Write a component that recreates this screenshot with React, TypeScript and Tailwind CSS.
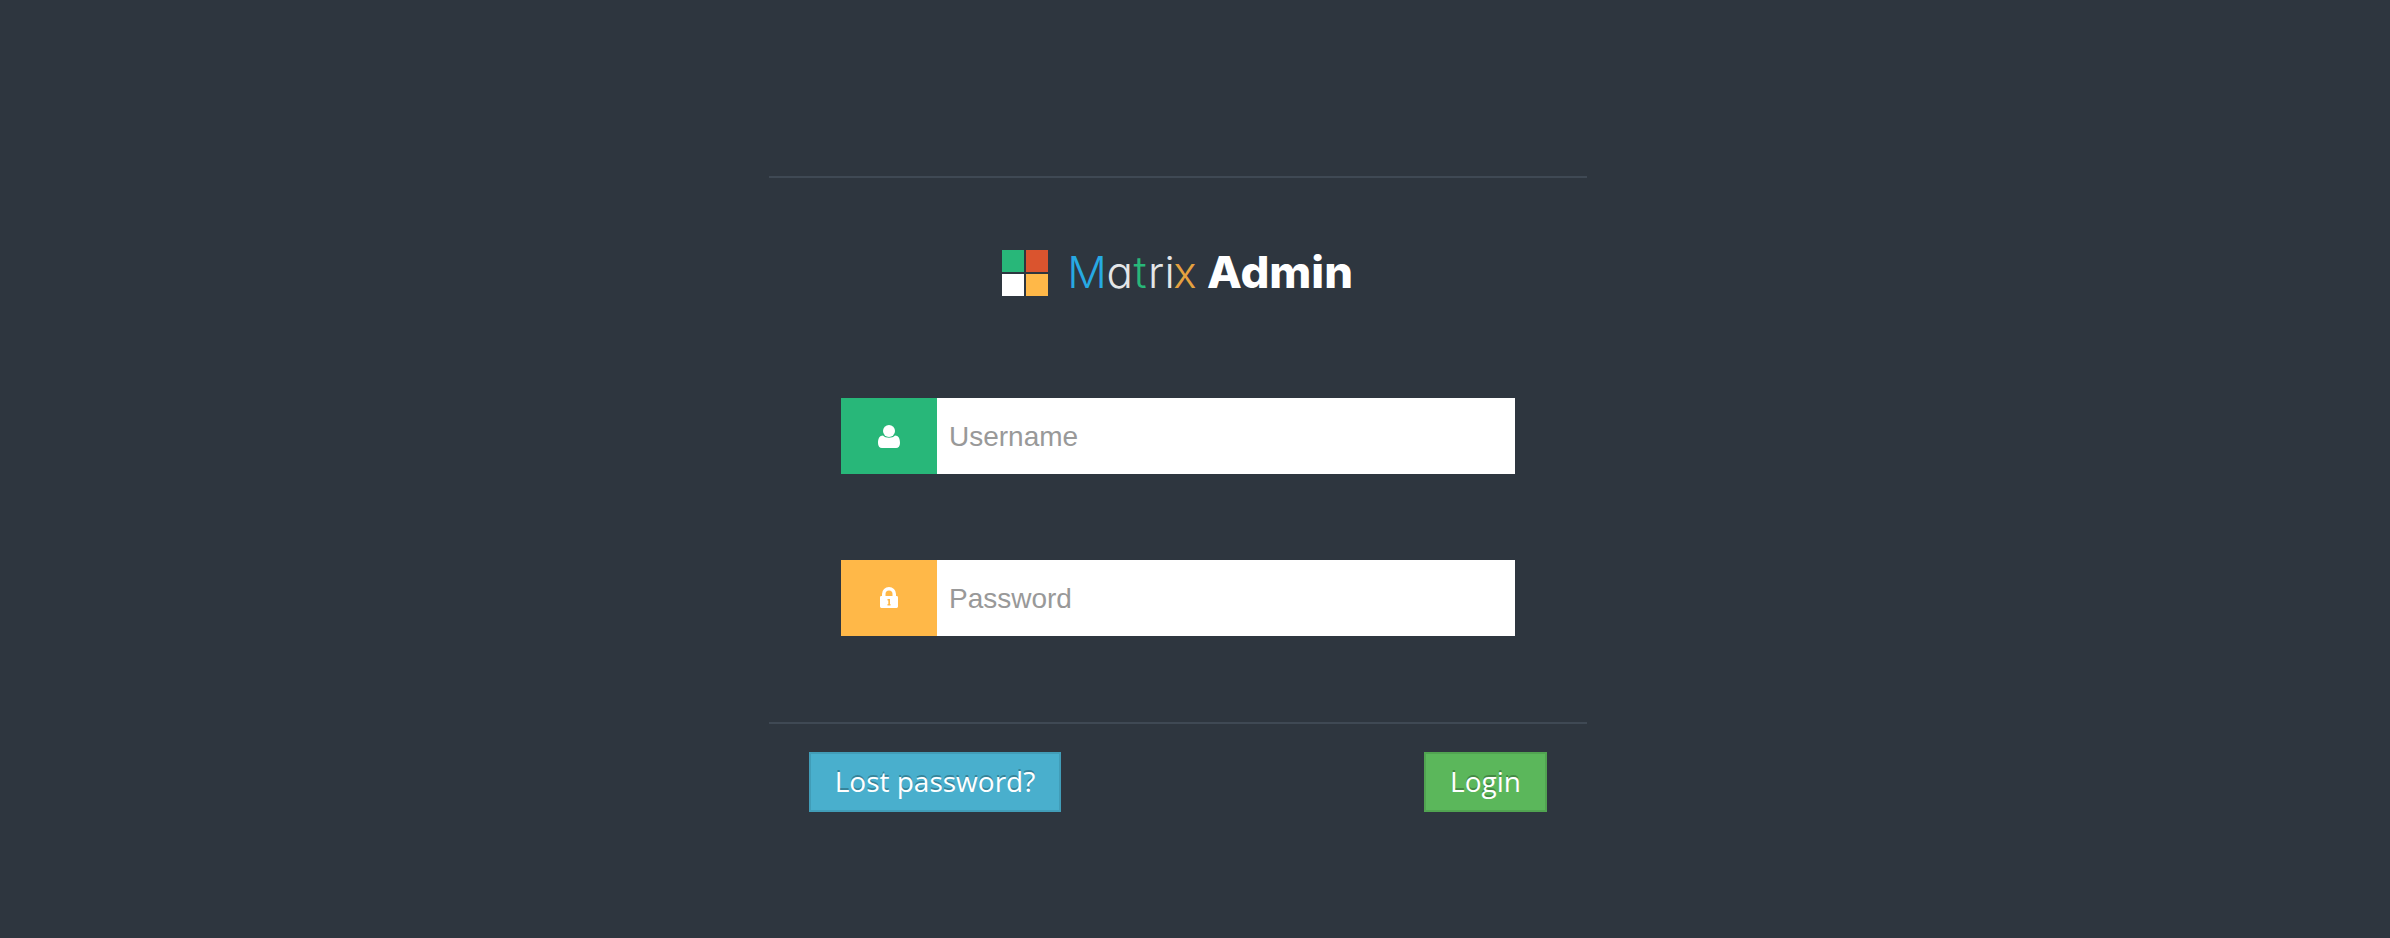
import React from "react";

const letters: { ch: string; x: number; fill: string }[] = [
  { ch: "M", x: 66.3, fill: "#27a9e3" },
  { ch: "a", x: 105.5, fill: "#e4e6e8" },
  { ch: "t", x: 132.5, fill: "#28b779" },
  { ch: "r", x: 147, fill: "#e4e6e8" },
  { ch: "i", x: 163.5, fill: "#e4e6e8" },
  { ch: "x", x: 172.3, fill: "#e5a23f" },
];

function Logo() {
  return (
    <svg width="354" height="54" viewBox="0 0 354 54" role="img" aria-label="Matrix Admin" className="font-['Inter',sans-serif] [font-feature-settings:'cv11']">
      <rect x="1" y="4" width="22" height="22" fill="#28b779" />
      <rect x="25" y="4" width="22" height="22" fill="#da542e" />
      <rect x="1" y="28" width="22" height="22" fill="#fff" />
      <rect x="25" y="28" width="22" height="22" fill="#ffb848" />
      <text y="42" fontSize="44" fontWeight="300">
        {letters.map((l) => (
          <tspan key={l.ch} x={l.x} fill={l.fill}>{l.ch}</tspan>
        ))}
      </text>
      <text x="206" y="42" fontSize="44" fontWeight="800" fill="#fff" textLength="146" lengthAdjust="spacingAndGlyphs">Admin</text>
    </svg>
  );
}

function UserIcon() {
  return (
    <svg width="22" height="24" viewBox="0 0 22 24" fill="#fff">
      <circle cx="11" cy="7" r="6" />
      <path d="M5 11.500C7.500 14.500 14.500 14.500 17 11.500C20.500 11.500 22 14.500 22 19C22 22 20.500 24 18 24H4C1.500 24 0 22 0 19C0 14.500 1.500 11.500 5 11.500Z" />
    </svg>
  );
}

function LockIcon() {
  return (
    <svg width="18" height="22" viewBox="0 0 18 22" fill="#fff">
      <path fillRule="evenodd" d="M2 9V7a7 7 0 0 1 14 0v2h.6a1.400 1.400 0 0 1 1.400 1.400v9.200a1.400 1.400 0 0 1-1.400 1.400H1.400A1.400 1.400 0 0 1 0 19.600v-9.200A1.400 1.400 0 0 1 1.400 9ZM5.500 9h7V7a3.500 3.500 0 0 0-7 0ZM7.500 12v1.500h.8v3.500h-.8v1.500h3v-1.500h-.5v-5Z" />
    </svg>
  );
}

function Field({ icon, color, type, placeholder }: { icon: React.ReactNode; color: string; type: string; placeholder: string }) {
  return (
    <div className="flex h-[76px] w-[674px]">
      <span className={`flex w-24 shrink-0 items-center justify-center ${color}`}>{icon}</span>
      <input
        type={type}
        placeholder={placeholder}
        className="min-w-0 flex-1 bg-white px-3 pt-0.5 font-['Liberation_Sans',Arial,sans-serif] text-[28px] text-[#555] outline-none placeholder:text-[#999]"
      />
    </div>
  );
}

const button =
  "h-[60px] border-2 border-black/10 pb-0.5 text-[28px] leading-[54px] text-white [text-shadow:0_-2px_0_rgba(0,0,0,0.25)]";

export default function App() {
  return (
    <div className="min-h-[938px] bg-[#2e363f] pt-[176px] font-['Open_Sans',sans-serif]">
      <form className="ml-[769px] w-[818px]">
        <div className="flex h-[548px] flex-col items-center border-y-2 border-[#3f4954]">
          <div className="mt-[68px] h-[54px]">
            <Logo />
          </div>
          <div className="mt-[98px] flex flex-col gap-[86px]">
            <Field icon={<UserIcon />} color="bg-[#28b779]" type="text" placeholder="Username" />
            <Field icon={<LockIcon />} color="bg-[#ffb848]" type="password" placeholder="Password" />
          </div>
        </div>
        <div className="flex justify-between px-10 pt-7">
          <button type="button" className={`${button} w-[252px] bg-[#49afcd]`}>Lost password?</button>
          <button type="button" className={`${button} w-[123px] bg-[#5bb75b]`}>Login</button>
        </div>
      </form>
    </div>
  );
}
